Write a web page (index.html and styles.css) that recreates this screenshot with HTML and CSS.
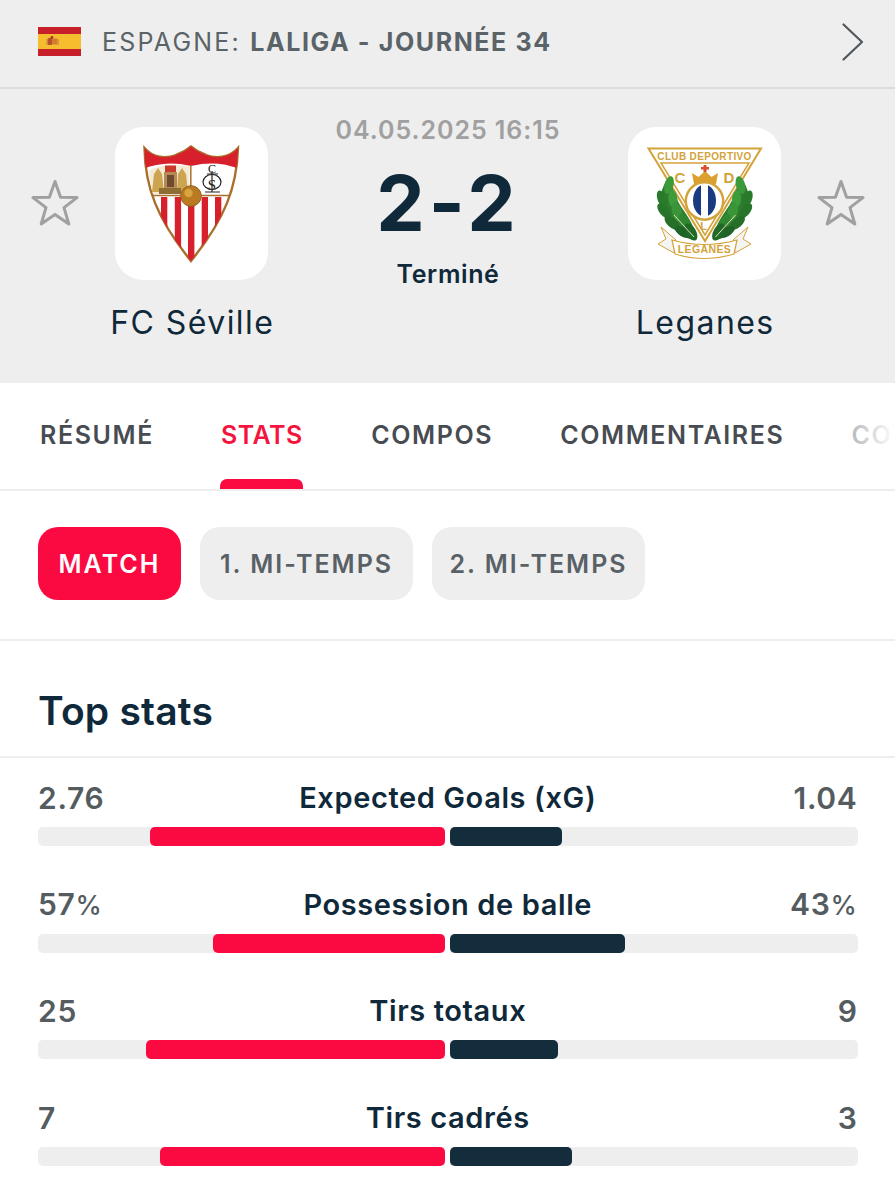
FILE: index.html
```html
<!DOCTYPE html>
<html lang="fr">
<head>
<meta charset="utf-8">
<title>FC Séville - Leganes</title>
<link rel="stylesheet" href="styles.css">
</head>
<body>
<header class="league">
  <svg class="flag" viewBox="0 0 43 29"><rect width="43" height="29" fill="#c8202a"/><rect y="7" width="43" height="15" fill="#f6bd2e"/><rect x="9.500" y="11" width="5" height="7" rx="1.500" fill="#b5532a"/><rect x="14.500" y="11.500" width="5" height="6" rx="1" fill="#d77b2a"/><rect x="8.500" y="12" width="1.200" height="6" fill="#c98a4a"/><rect x="19.500" y="12" width="1.200" height="6" fill="#c98a4a"/><circle cx="14" cy="10.500" r="1.400" fill="#a5352a"/></svg>
  <div class="league-name">ESPAGNE: <strong>LALIGA - JOURNÉE 34</strong></div>
  <svg class="chevron" viewBox="0 0 22 38"><path d="M1.500 1.500 L20 19 L1.500 36.500" fill="none" stroke="#50585d" stroke-width="2.200" stroke-linecap="round" stroke-linejoin="round"/></svg>
</header>

<section class="match">
  <svg class="star" viewBox="0 0 48 48"><path d="M24 2.500 L29.600 18.300 L46 18.600 L33 28.600 L37.800 45 L24 35.400 L10.200 45 L15 28.600 L2 18.600 L18.400 18.300 Z" fill="none" stroke="#a0a0a0" stroke-width="3" stroke-linejoin="round"/></svg>
  <div class="team team-left">
    <div class="tile">
      <svg viewBox="0 0 153 153" class="crest">
        <defs><clipPath id="shield"><path d="M29.500 21 C38 31 51 32 61 28 C67 26 72 23 76 19.500 C80 23 85 26 91 28 C101 32 114 31 123 21 C122 60 110 92 76 134 C42 92 30 60 29.500 21 Z"/></clipPath></defs>
        <path d="M29.500 21 C38 31 51 32 61 28 C67 26 72 23 76 19.500 C80 23 85 26 91 28 C101 32 114 31 123 21 C122 60 110 92 76 134 C42 92 30 60 29.500 21 Z" fill="#fff" stroke="#a9702c" stroke-width="2.400"/>
        <g clip-path="url(#shield)">
          <path d="M28 18 H125 V42 C112 37 96 34 76 39 C56 34 40 37 28 42 Z" fill="#d8202c"/>
          <rect x="46" y="70" width="6.300" height="60" fill="#d8202c"/>
          <rect x="59.800" y="70" width="6.300" height="60" fill="#d8202c"/>
          <rect x="73" y="70" width="6.400" height="65" fill="#d8202c"/>
          <rect x="86.700" y="70" width="6.300" height="60" fill="#d8202c"/>
          <rect x="100" y="70" width="6.300" height="60" fill="#d8202c"/>
          <path d="M30 68.500 H123" stroke="#a9702c" stroke-width="1.500"/>
          <path d="M75.800 38 V68" stroke="#a9702c" stroke-width="1.500"/>
        </g>
        <path d="M34 44 C38 40 50 37 74.500 39 V67 H38 C36 60 34 52 34 44 Z" fill="#f5ead6"/>
        <path d="M37 65 L39 47 L43 41 L47 47 L49 65 Z" fill="#cda550"/>
        <path d="M62 65 L63 47 L67 41 L71 47 L73 65 Z" fill="#cda550"/>
        <rect x="50" y="38.500" width="11" height="7" fill="#c93a2c"/>
        <path d="M49 45 H62 V63 H49 Z" fill="#b58a55"/>
        <path d="M52 48 H59 V60 H52 Z" fill="#6d4c32"/>
        <path d="M44 61 H66 V67 H44 Z" fill="#8d6d34"/>
        <ellipse cx="97" cy="55" rx="9" ry="7.500" fill="none" stroke="#222" stroke-width="1.200"/>
        <path d="M97 44 V65 M90 65 H105 M92 47 H103" fill="none" stroke="#222" stroke-width="1.200"/>
        <text x="97" y="46" class="mono">C</text>
        <text x="97" y="63" class="mono mono-s">S</text>
        <circle cx="76" cy="69" r="10.300" fill="#b97a22" stroke="#8f6120" stroke-width="1"/>
        <circle cx="73.500" cy="66" r="4.200" fill="#d9a33f"/>
      </svg>
    </div>
    <div class="team-name">FC Séville</div>
  </div>
  <div class="center">
    <div class="date">04.05.2025 16:15</div>
    <div class="score">2-2</div>
    <div class="status">Terminé</div>
  </div>
  <div class="team team-right">
    <div class="tile">
      <svg viewBox="0 0 153 153" class="crest">
        <defs>
          <clipPath id="disc"><ellipse cx="76.500" cy="73.500" rx="11.500" ry="16"/></clipPath>
          <g id="laurel">
            <path d="M41 50 C33 60 27 80 38 92 C46 105 58 113 68 113 C68 100 60 90 52 78 C46 68 44 58 41 50 Z" fill="#2c7d2e"/>
            <ellipse cx="41" cy="58" rx="4.500" ry="9" fill="#3c9a3a" transform="rotate(15 41 58)"/>
            <ellipse cx="34" cy="72" rx="4.500" ry="9" fill="#2a7a2c" transform="rotate(-20 34 72)"/>
            <ellipse cx="45" cy="72" rx="4.500" ry="9" fill="#3f9c3c" transform="rotate(-5 45 72)"/>
            <ellipse cx="36" cy="84" rx="4.500" ry="9" fill="#27752a" transform="rotate(-40 36 84)"/>
            <ellipse cx="49" cy="85" rx="5" ry="9.500" fill="#3a9539" transform="rotate(-15 49 85)"/>
            <ellipse cx="44" cy="96" rx="4.500" ry="9" fill="#256f29" transform="rotate(-50 44 96)"/>
            <ellipse cx="57" cy="96" rx="5" ry="10" fill="#2f8731" transform="rotate(-25 57 96)"/>
            <ellipse cx="55" cy="105" rx="4.500" ry="9" fill="#1f6426" transform="rotate(-60 55 105)"/>
            <ellipse cx="63" cy="105" rx="5" ry="9.500" fill="#1f6a28" transform="rotate(-30 63 105)"/>
            <path d="M46 88 L66 110" stroke="#e7dcb8" stroke-width="1" fill="none"/>
          </g>
        </defs>
        <path d="M20.500 21.500 H133 L77 114 Z" fill="#fff" stroke="#d3a33a" stroke-width="2"/>
        <path d="M33 36 H121 L77 108 Z" fill="#fff" stroke="#d3a33a" stroke-width="1.500"/>
        <text x="76.500" y="32.500" class="leg-top">CLUB DEPORTIVO</text>
        <text x="52" y="55.500" class="leg-cd">C</text>
        <text x="101" y="55.500" class="leg-cd">D</text>
        <path d="M66 57 L64 46 L70.500 50 L77 44 L83.500 50 L90 46 L88 57 Z" fill="#dba02d"/>
        <rect x="75.500" y="38" width="3" height="7" fill="#d9512c"/>
        <rect x="73" y="40" width="8" height="2.500" fill="#d9512c"/>
        <circle cx="76.500" cy="74" r="18.700" fill="#fff" stroke="#d3a33a" stroke-width="2.400"/>
        <g clip-path="url(#disc)">
          <rect x="64" y="57" width="9" height="33" fill="#1a3a82"/>
          <rect x="80" y="57" width="9" height="33" fill="#1a3a82"/>
        </g>
        <text x="75.500" y="103" class="leg-l">L</text>
        <use href="#laurel"/>
        <use href="#laurel" transform="matrix(-1 0 0 1 153.500 0)"/>
        <path d="M33 100 L48 113 L46 126 L30 117 L38 112 Z" fill="#f4f4f2" stroke="#d3a33a" stroke-width="1"/>
        <path d="M120 100 L105 113 L107 126 L123 117 L115 112 Z" fill="#f4f4f2" stroke="#d3a33a" stroke-width="1"/>
        <path d="M44 113 Q76 122 109 113 L106 127 Q76 136 47 127 Z" fill="#fff" stroke="#d3a33a" stroke-width="1.200"/>
        <text x="76.500" y="126" class="leg-bottom">LEGANÉS</text>
      </svg>
    </div>
    <div class="team-name">Leganes</div>
  </div>
  <svg class="star" viewBox="0 0 48 48"><path d="M24 2.500 L29.600 18.300 L46 18.600 L33 28.600 L37.800 45 L24 35.400 L10.200 45 L15 28.600 L2 18.600 L18.400 18.300 Z" fill="none" stroke="#a0a0a0" stroke-width="3" stroke-linejoin="round"/></svg>
</section>

<nav class="tabs">
  <a class="tab">RÉSUMÉ</a>
  <a class="tab tab-active">STATS</a>
  <a class="tab">COMPOS</a>
  <a class="tab">COMMENTAIRES</a>
  <a class="tab">COTES</a>
</nav>

<div class="filters">
  <button class="chip chip-active">MATCH</button>
  <button class="chip">1. MI-TEMPS</button>
  <button class="chip">2. MI-TEMPS</button>
</div>

<h2 class="section-title">Top stats</h2>

<div class="stats">
  <div class="stat">
    <div class="stat-head"><span class="val">2.76</span><span class="label">Expected Goals (xG)</span><span class="val val-r">1.04</span></div>
    <div class="bars"><div class="half half-l"><div class="fill fill-l" style="width:72.6%"></div></div><div class="half"><div class="fill fill-r" style="width:27.4%"></div></div></div>
  </div>
  <div class="stat">
    <div class="stat-head"><span class="val">57<span class="pct">%</span></span><span class="label">Possession de balle</span><span class="val val-r">43<span class="pct">%</span></span></div>
    <div class="bars"><div class="half half-l"><div class="fill fill-l" style="width:57%"></div></div><div class="half"><div class="fill fill-r" style="width:43%"></div></div></div>
  </div>
  <div class="stat">
    <div class="stat-head"><span class="val">25</span><span class="label">Tirs totaux</span><span class="val val-r">9</span></div>
    <div class="bars"><div class="half half-l"><div class="fill fill-l" style="width:73.5%"></div></div><div class="half"><div class="fill fill-r" style="width:26.5%"></div></div></div>
  </div>
  <div class="stat">
    <div class="stat-head"><span class="val">7</span><span class="label">Tirs cadrés</span><span class="val val-r">3</span></div>
    <div class="bars"><div class="half half-l"><div class="fill fill-l" style="width:70%"></div></div><div class="half"><div class="fill fill-r" style="width:30%"></div></div></div>
  </div>
</div>
</body>
</html>
```

FILE: styles.css
```css
* { box-sizing: border-box; }
html, body { margin: 0; padding: 0; background: #fff; }
body { font-family: "Inter", "Liberation Sans", sans-serif; color: #10293a; width: 895px; height: 1200px; overflow: hidden; }

.league { height: 89px; background: #eeeeee; border-bottom: 2px solid #dcdcdc; display: flex; align-items: center; padding: 0 31px 4px 38px; }
.flag { width: 43px; height: 29px; flex: none; }
.league-name { margin-left: 21px; font-size: 25px; letter-spacing: 2.2px; color: #5a6368; flex: 1; white-space: pre; }
.league-name strong { font-weight: 700; letter-spacing: 1.6px; }
.chevron { width: 22px; height: 38px; flex: none; }

.match { height: 294px; background: #eeeeee; display: flex; align-items: flex-start; padding: 38px 30px 0 31px; }
.star { width: 48px; height: 48px; flex: none; margin-top: 52px; }
.team { width: 153px; flex: none; display: flex; flex-direction: column; align-items: center; }
.team-left { margin-left: 36px; }
.team-right { margin-right: 36px; }
.tile { width: 153px; height: 153px; background: #fff; border-radius: 28px; }
.crest { display: block; width: 153px; height: 153px; }
.team-name { margin-top: 23px; padding-left: 1.500px; font-size: 32px; line-height: 39px; white-space: nowrap; letter-spacing: 1.45px; }
.center { flex: 1; display: flex; flex-direction: column; align-items: center; margin-top: -12px; min-width: 0; }
.date { font-size: 25px; line-height: 30px; font-weight: 600; color: #a0a0a0; letter-spacing: 0.95px; white-space: nowrap; }
.score { font-size: 77px; line-height: 90px; font-weight: 700; color: #10293a; margin-top: 13px; letter-spacing: 4px; }
.status { font-size: 25px; line-height: 30px; font-weight: 600; margin-top: 11px; letter-spacing: 0.6px; }

.mono { font-family: "Liberation Serif", serif; font-size: 12px; text-anchor: middle; fill: #222; }
.mono-s { font-size: 15px; }
.leg-top { font-family: "Liberation Sans", sans-serif; font-size: 10px; font-weight: 700; text-anchor: middle; fill: #d3a33a; letter-spacing: 0.35px; }
.leg-cd { font-family: "Liberation Sans", sans-serif; font-size: 15px; font-weight: 700; text-anchor: middle; fill: #d3a33a; }
.leg-l { font-family: "Liberation Sans", sans-serif; font-size: 11px; font-weight: 700; text-anchor: middle; fill: #d3a33a; }
.leg-bottom { font-family: "Liberation Sans", sans-serif; font-size: 10.500px; font-weight: 700; text-anchor: middle; fill: #d3a33a; letter-spacing: 0.4px; }

.tabs { height: 108px; border-bottom: 2px solid #eeeeee; display: flex; align-items: flex-start; gap: 67px; padding: 0 0 0 40px; overflow: hidden; position: relative; }
.tabs::after { content: ""; position: absolute; top: 0; right: 0; width: 45px; height: 100px; background: linear-gradient(to right, rgba(255,255,255,.6), #fff); }
.tab { position: relative; flex: none; height: 106px; padding-top: 35px; font-size: 25px; line-height: 34px; font-weight: 600; letter-spacing: 1.6px; color: #474c52; }
.tab-active { color: #f4153f; letter-spacing: 0.5px; margin-right: 1.500px; }
.tab-active::after { content: ""; position: absolute; left: -1px; right: 0; bottom: 0; height: 10px; background: #fb0a42; border-radius: 7px 7px 0 0; }

.filters { height: 150px; border-bottom: 2px solid #eeeeee; display: flex; gap: 19px; padding: 36px 38px 0; align-items: flex-start; }
.chip { height: 73px; border: 0; border-radius: 20px; background: #eeeeee; color: #596166; font-family: inherit; font-size: 25px; font-weight: 600; letter-spacing: 2px; width: 213px; padding: 0; }
.chip-active { background: #fb0a42; color: #fff; width: 143px; }

.section-title { margin: 0; height: 117px; border-bottom: 2px solid #eeeeee; padding: 48px 38px 0; font-size: 39px; line-height: 44px; font-weight: 600; color: #10293a; letter-spacing: 0.2px; }

.stats { padding: 20px 37.500px 0 38px; }
.stat { height: 106.600px; }
.stat-head { display: flex; align-items: center; height: 40px; font-size: 29px; line-height: 40px; margin-bottom: 9px; }
.val { flex: 1; color: #555c60; font-size: 30px; font-weight: 600; letter-spacing: 0.7px; }
.val-r { text-align: right; }
.pct { font-size: 26.500px; font-weight: 500; }
.label { font-weight: 600; color: #10293a; letter-spacing: 0.6px; white-space: nowrap; }
.bars { display: flex; gap: 5px; height: 19px; }
.half { flex: 1; background: #eeeeee; border-radius: 0 5px 5px 0; display: flex; }
.half-l { justify-content: flex-end; border-radius: 5px 0 0 5px; }
.fill { height: 100%; border-radius: 5px; }
.fill-l { background: #fb0a42; }
.fill-r { background: #132d3c; }
```
